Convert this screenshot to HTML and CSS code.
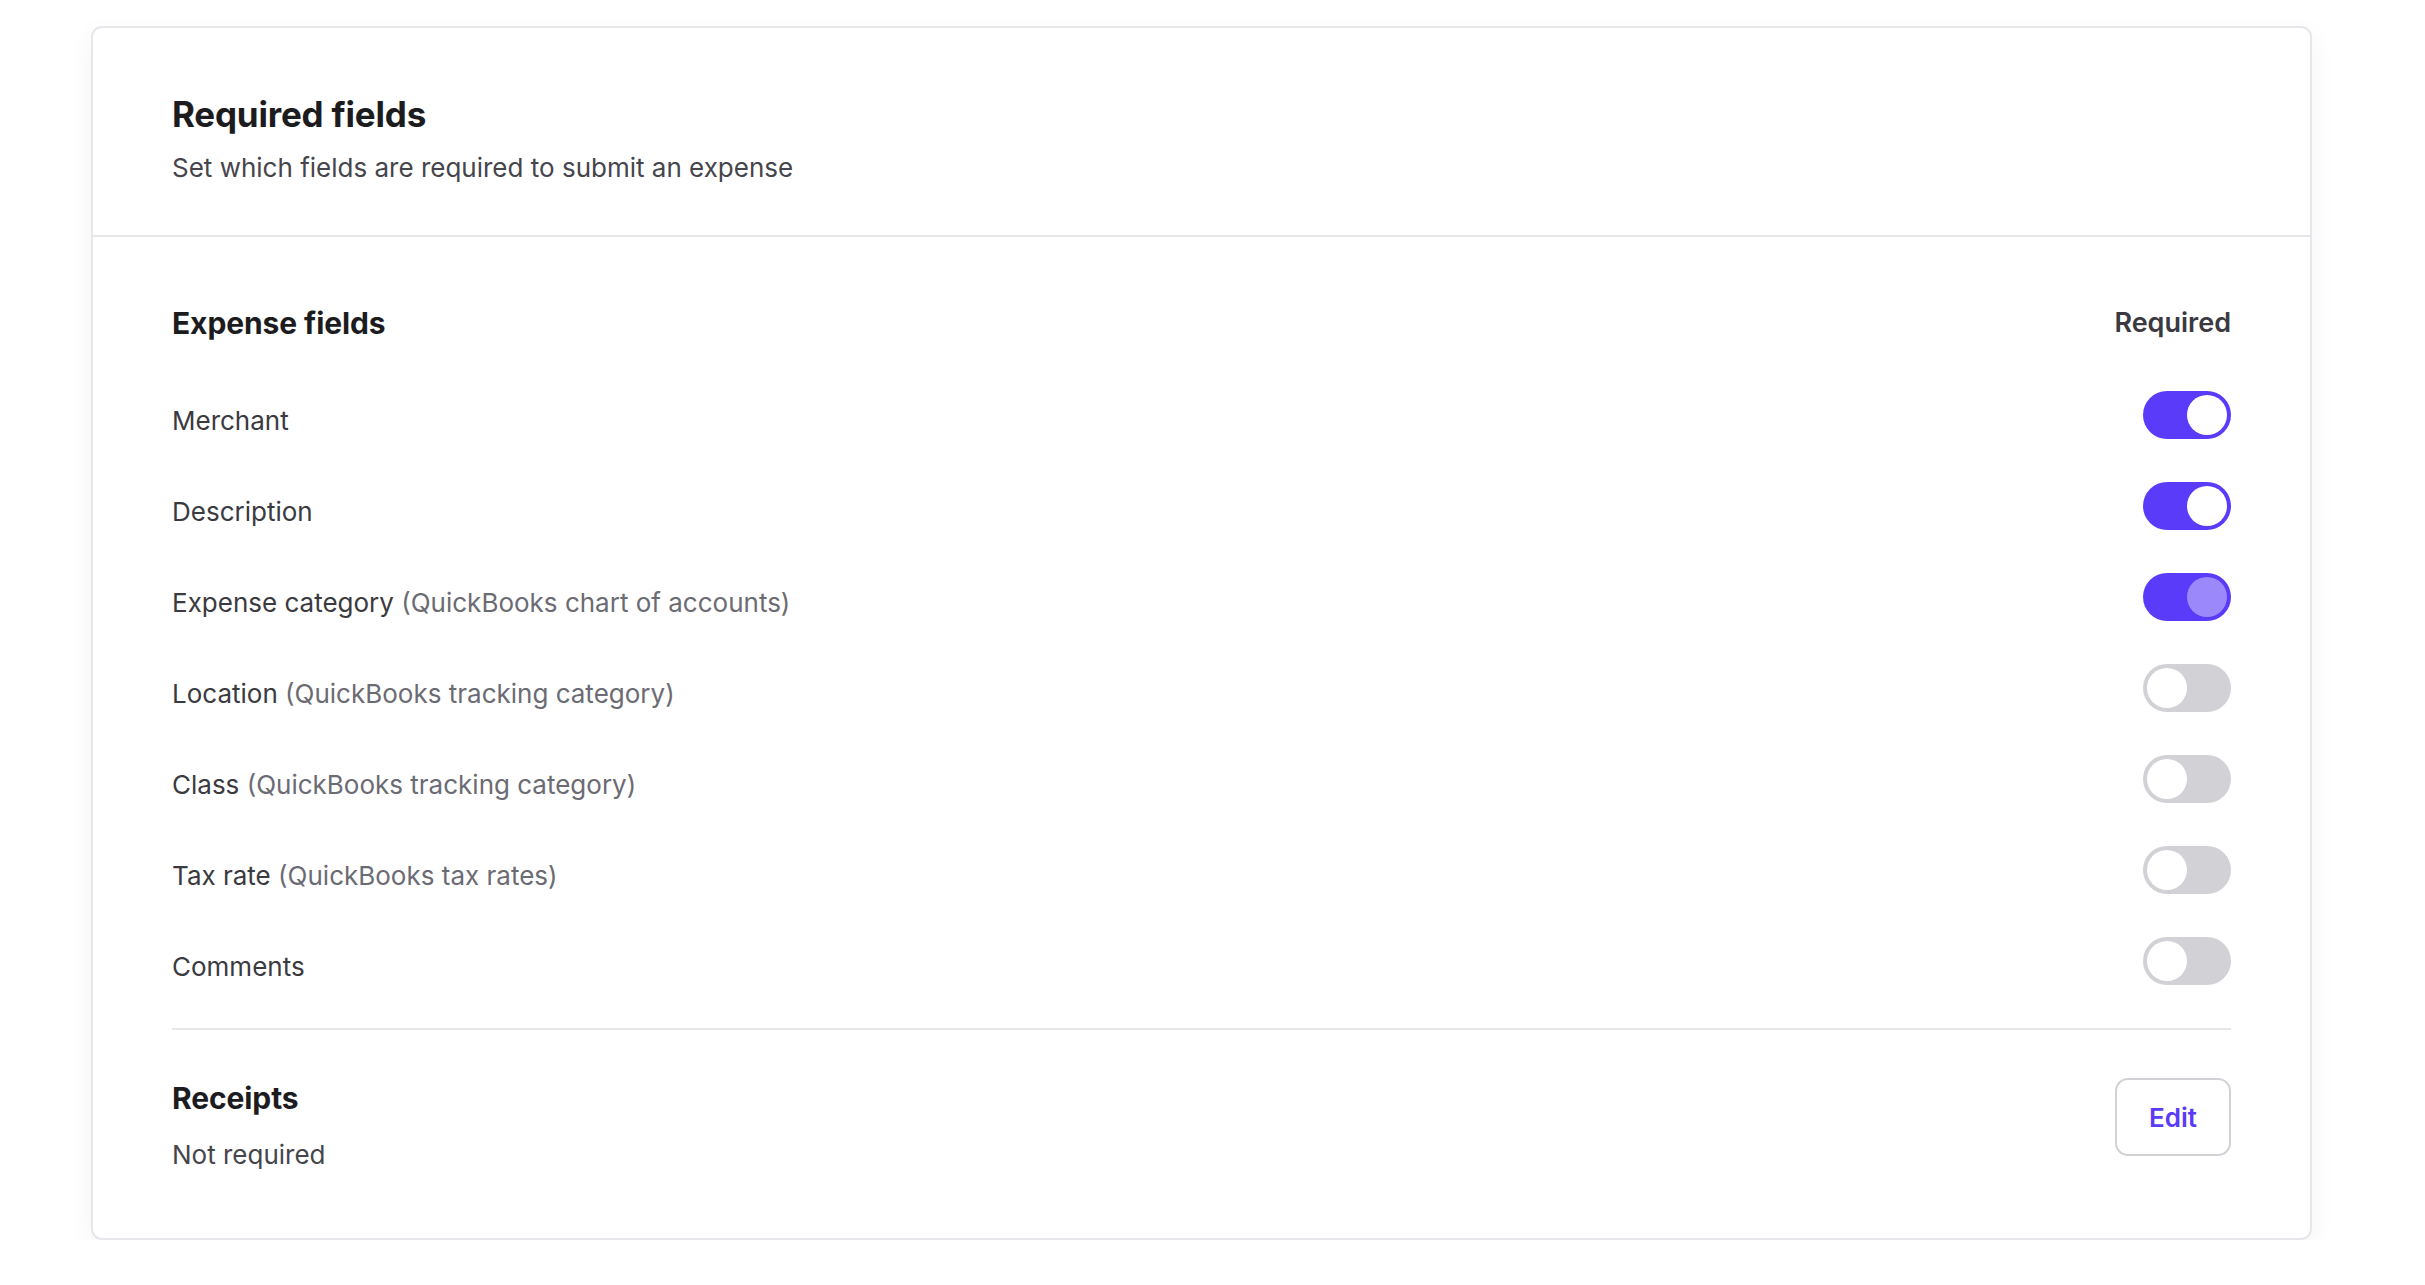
FILE: index.html
```html
<!DOCTYPE html>
<html lang="en">
<head>
<meta charset="utf-8">
<title>Required fields</title>
<link rel="stylesheet" href="styles.css">
</head>
<body>
<div class="page">
  <section class="card">
    <header class="card-header">
      <h1 class="title">Required fields</h1>
      <p class="subtitle">Set which fields are required to submit an expense</p>
    </header>
    <div class="card-body">
      <div class="field-list">
        <div class="list-head">
          <h2 class="section-title">Expense fields</h2>
          <span class="col-label">Required</span>
        </div>
        <div class="field-row">
          <span class="field-name">Merchant</span>
          <span class="toggle on"><span class="knob"></span></span>
        </div>
        <div class="field-row">
          <span class="field-name">Description</span>
          <span class="toggle on"><span class="knob"></span></span>
        </div>
        <div class="field-row">
          <span class="field-name">Expense category <span class="field-note">(QuickBooks chart of accounts)</span></span>
          <span class="toggle on locked"><span class="knob"></span></span>
        </div>
        <div class="field-row">
          <span class="field-name">Location <span class="field-note">(QuickBooks tracking category)</span></span>
          <span class="toggle"><span class="knob"></span></span>
        </div>
        <div class="field-row">
          <span class="field-name">Class <span class="field-note">(QuickBooks tracking category)</span></span>
          <span class="toggle"><span class="knob"></span></span>
        </div>
        <div class="field-row">
          <span class="field-name">Tax rate <span class="field-note">(QuickBooks tax rates)</span></span>
          <span class="toggle"><span class="knob"></span></span>
        </div>
        <div class="field-row">
          <span class="field-name">Comments</span>
          <span class="toggle"><span class="knob"></span></span>
        </div>
      </div>
      <div class="receipts">
        <div class="receipts-text">
          <h2 class="section-title">Receipts</h2>
          <p class="receipts-status">Not required</p>
        </div>
        <button class="edit-btn" type="button">Edit</button>
      </div>
    </div>
  </section>
</div>
</body>
</html>
```

FILE: styles.css
```css
* {
  box-sizing: border-box;
}

html, body {
  margin: 0;
  padding: 0;
  background: #ffffff;
}

body {
  font-family: Inter, "Liberation Sans", sans-serif;
  color: #3a3a40;
}

.page {
  padding: 26px 113px 0 91px;
}

.card {
  background: #ffffff;
  border: 2px solid #e6e6eb;
  border-radius: 11px;
  box-shadow: 0 8px 26px rgba(0, 0, 0, 0.05);
}

.card-header {
  padding: 64px 79px 47px;
  border-bottom: 2px solid #e6e6eb;
}

.title {
  margin: 0;
  font-size: 35px;
  line-height: 44px;
  font-weight: 700;
  color: #1c1c1f;
  letter-spacing: -0.2px;
}

.subtitle {
  margin: 12px 0 0;
  font-size: 26px;
  line-height: 40px;
  font-weight: 400;
  color: #45454b;
}

.card-body {
  padding: 61px 79px 63px;
}

.field-list {
  display: flex;
  flex-direction: column;
  gap: 43px;
  padding-bottom: 43px;
  border-bottom: 2px solid #e6e6eb;
}

.list-head {
  display: flex;
  align-items: center;
  justify-content: space-between;
  height: 50px;
}

.section-title {
  margin: 0;
  font-size: 30px;
  line-height: 40px;
  font-weight: 700;
  color: #1c1c1f;
  letter-spacing: -0.1px;
}

.col-label {
  font-size: 27px;
  line-height: 40px;
  font-weight: 600;
  color: #3a3a40;
}

.field-row {
  display: flex;
  align-items: center;
  justify-content: space-between;
  height: 48px;
}

.field-name {
  margin-top: 12px;
  font-size: 26px;
  line-height: 40px;
  color: #3a3a40;
}

.field-note {
  color: #6b6b73;
}

.toggle {
  display: flex;
  align-items: center;
  width: 88px;
  height: 48px;
  padding: 4px;
  border-radius: 24px;
  background: #d1d1d6;
  justify-content: flex-start;
}

.toggle.on {
  background: #5b3bfa;
  justify-content: flex-end;
}

.knob {
  display: block;
  width: 40px;
  height: 40px;
  border-radius: 50%;
  background: #ffffff;
}

.toggle.locked .knob {
  background: #9b89fb;
}

.receipts {
  display: flex;
  align-items: flex-start;
  justify-content: space-between;
  padding-top: 48px;
}

.receipts-status {
  margin: 17px 0 0;
  font-size: 26px;
  line-height: 40px;
  color: #45454b;
}

.edit-btn {
  width: 116px;
  height: 78px;
  border: 2px solid #d1d1d6;
  border-radius: 13px;
  background: #ffffff;
  font-family: Inter, "Liberation Sans", sans-serif;
  font-size: 26px;
  font-weight: 600;
  color: #5b3bfa;
  cursor: pointer;
}
```
